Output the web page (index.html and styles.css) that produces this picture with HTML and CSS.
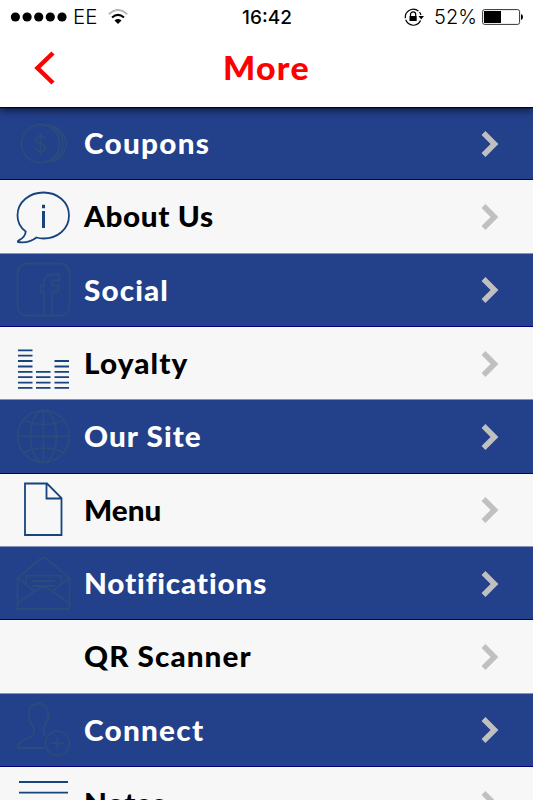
FILE: index.html
```html
<!DOCTYPE html>
<html lang="en">
<head>
<meta charset="utf-8">
<title>More</title>
<link rel="stylesheet" href="styles.css">
</head>
<body>
<div class="screen">
  <header class="top">
    <div class="status">
      <div class="carrier">
        <svg width="58" height="12" viewBox="0 0 58 12"><circle cx="5.4" cy="6" r="4.6"/><circle cx="17.1" cy="6" r="4.6"/><circle cx="28.7" cy="6" r="4.6"/><circle cx="40.3" cy="6" r="4.6"/><circle cx="52" cy="6" r="4.6"/></svg>
        <span class="network">EE</span>
        <svg class="wifi" width="20" height="16" viewBox="0 0 20 16" fill="none" stroke-width="2"><path d="M.8 5.2Q10-3.2 19.2 5.2" stroke="#b5b5b5"/><path d="M4 8.6Q10 3.2 16 8.6" stroke="#000"/><path d="M6.5 11.4Q10 8.5 13.500 11.4L10 15Z" fill="#000"/></svg>
      </div>
      <time class="clock">16:42</time>
      <div class="power">
        <svg width="20" height="18" viewBox="0 0 20 18" fill="none" stroke="#000" stroke-width="1.2"><path d="M16.6 12.500A8 8 0 1 1 17 7" stroke-dasharray="19 1.500"/><path d="M14.500 8H20L17.200 11.500Z" fill="#000" stroke="none"/><path d="M6.500 8V6.500a2.600 2.600 0 0 1 5.200 0V8"/><path d="M5.500 8h7.200v5H5.500z" fill="#000" stroke="none"/></svg>
        <span class="percent">52%</span>
        <svg width="42" height="18" viewBox="0 0 42 18"><rect x=".6" y="1.600" width="37" height="14.800" rx="2" fill="none" stroke="#333"/><path d="M2 3h17v12H2z"/><path d="M39 6q2 .5 2 3t-2 3z"/></svg>
      </div>
    </div>
    <nav class="bar">
      <svg class="back" width="22" height="34" viewBox="0 0 22 34" fill="none" stroke="#f00" stroke-width="4.500"><path d="M19 2L3.500 17L19 32"/></svg>
      <h1 class="title">More</h1>
    </nav>
  </header>
  <main class="list">
    <a class="row blue"><svg class="icon" viewBox="0 0 84 73"><circle cx="40.500" cy="36.700" r="19"/><path d="M46 18.500a18.300 18.300 0 0 1 0 36.500M52 19a18.300 18.300 0 0 1 0 35.500M45 32q-1-3-4.500-3-4.500 0-4.500 3.500t4.500 4 4.700 4-4.700 4q-4 0-5-3.500M40.500 26v21.500"/></svg><span class="label coupons">Coupons</span><svg class="go" viewBox="0 0 18 28"><path d="M2.500 3L13.500 14L2.500 25"/></svg></a>
    <a class="row"><svg class="icon" viewBox="0 0 84 73"><path d="M43.500 12.500C57 12.500 69 21.500 69 35.500S57 58.500 43.500 58.500q-4 0-7-1-8 6.200-18.500 4.500-.5-1 .8-1.600 6.700-3.500 6.900-8.900C21 48 17.500 42.500 17.500 35.500 17.500 21.500 30 12.500 43.500 12.500Z"/><path d="M43.500 31v17M43.500 24.800v3.400" stroke-width="3"/></svg><span class="label about">About Us</span><svg class="go" viewBox="0 0 18 28"><path d="M2.500 3L13.500 14L2.500 25"/></svg></a>
    <a class="row blue"><svg class="icon" viewBox="0 0 84 73"><rect x="17.500" y="10.500" width="52" height="52" rx="9"/><path d="M44 62.500V38.500h-3.500v-6H44V29q0-7 8-7.500h7v6h-5q-2 0-2 3v2h7l-1 6h-6V62.500"/></svg><span class="label social">Social</span><svg class="go" viewBox="0 0 18 28"><path d="M2.500 3L13.500 14L2.500 25"/></svg></a>
    <a class="row"><svg class="icon" viewBox="0 0 84 73"><path d="M18 23.300h14.500M18 28.600h14.500M18 34h14.500M18 39.500h14.500M18 44.800h14.500M18 50.200h14.500M18 55.600h14.500M18 60.900h14.500M36 44.800h14.500M36 50.200h14.500M36 55.600h14.500M36 60.900h14.500M54.500 34H69M54.500 39.500H69M54.500 44.800H69M54.500 50.200H69M54.500 55.600H69M54.500 60.900H69"/></svg><span class="label loyalty">Loyalty</span><svg class="go" viewBox="0 0 18 28"><path d="M2.500 3L13.500 14L2.500 25"/></svg></a>
    <a class="row blue"><svg class="icon" viewBox="0 0 84 73"><circle cx="43.500" cy="36.300" r="26"/><ellipse cx="43.500" cy="36.300" rx="13" ry="26"/><path d="M43.500 10.300v52M17.500 36.300h52M23 20q20.500 9 41 0M23 52.600q20.500-9 41 0"/></svg><span class="label site">Our Site</span><svg class="go" viewBox="0 0 18 28"><path d="M2.500 3L13.500 14L2.500 25"/></svg></a>
    <a class="row"><svg class="icon" viewBox="0 0 84 73"><path d="M25 10.500H47L61.500 25V62H25ZM46.500 10.700v14.800h15"/></svg><span class="label">Menu</span><svg class="go" viewBox="0 0 18 28"><path d="M2.500 3L13.500 14L2.500 25"/></svg></a>
    <a class="row blue"><svg class="icon" viewBox="0 0 84 73"><path d="M17.500 31V62H69.500V31L47 12.300q-3.500-3-7 0ZM17.500 31L34 43.500M69.500 31L53 43.500M17.500 56.500L38 42q5.500-4 11 0L69.500 56.500M26 36.500V28.700H61V36.500M32 34h23M32 39h23"/></svg><span class="label notifications">Notifications</span><svg class="go" viewBox="0 0 18 28"><path d="M2.500 3L13.500 14L2.500 25"/></svg></a>
    <a class="row"><svg class="icon" viewBox="0 0 84 73"></svg><span class="label scanner">QR Scanner</span><svg class="go" viewBox="0 0 18 28"><path d="M2.500 3L13.500 14L2.500 25"/></svg></a>
    <a class="row blue"><svg class="icon" viewBox="0 0 84 73"><circle cx="57.500" cy="50.200" r="12"/><path d="M57.500 43.700v13M51 50.200h13M44 55H17.500q0-5 7-8.500 9.500-3 9.500-7V35q-3-3-3.500-6.500-2-1-1.500-4.500-1-13 9-13.500 11 .5 10 13.500 .5 3.500-1.500 4.500-.5 3.500-3 6.500v4.500q0 2 2 4"/></svg><span class="label connect">Connect</span><svg class="go" viewBox="0 0 18 28"><path d="M2.500 3L13.500 14L2.500 25"/></svg></a>
    <a class="row"><svg class="icon" viewBox="0 0 84 73"><path d="M19 15h49M19 25.700h49M19 36.500h49M19 47.500h49"/></svg><span class="label notes">Notes</span><svg class="go" viewBox="0 0 18 28"><path d="M2.500 3L13.500 14L2.500 25"/></svg></a>
  </main>
</div>
</body>
</html>
```
FILE: styles.css
```css
* { box-sizing: border-box; }
body { margin: 0; background: #f7f7f7; }
.screen { width: 533px; height: 800px; overflow: hidden; font-family: Lato, "Liberation Sans", sans-serif; }
.top { position: relative; height: 107px; background: #fff; box-shadow: 0 1px 1px #000044, 0 3px 8px rgba(0,0,0,.65); }
.status { height: 34px; display: grid; grid-template-columns: 1fr auto 1fr; align-items: center; padding: 0 9px 0 10px; }
.carrier, .power { display: flex; align-items: center; }
.power { justify-content: flex-end; }
.network { margin-left: 5px; font: 300 20.5px/24px Inter, sans-serif; }
.wifi { margin-left: 11px; }
.clock { font: 500 19px Inter, sans-serif; }
.percent { margin: 0 5px 0 10px; font: 300 20px Inter, sans-serif; }
.bar { height: 68px; display: flex; align-items: center; padding-left: 34px; }
.back { flex: none; }
.title { flex: 1; margin: 0 56px 0 0; text-align: center; font-size: 32px; font-weight: 900; color: #f00; letter-spacing: 1.2px; line-height: 68px; transform: scaleX(1.06); }
.row { height: 73.33px; display: flex; align-items: center; background: #f7f7f7; color: #000; border-bottom: 1px solid #8793b5; }
.row.blue { background: #23408b; color: #fff; border-bottom-color: #00007f; }
.icon { flex: none; width: 84px; height: 73px; fill: none; stroke: #17437e; stroke-width: 1.8; }
.blue .icon { stroke: #2b4b7c; }
.label { flex: 1; font-size: 28px; font-weight: 900; white-space: nowrap; transform: scaleX(1.06); transform-origin: left; font-variant-ligatures: none; }
.coupons, .connect { letter-spacing: 1.2px; }
.social, .loyalty { letter-spacing: 1.05px; }
.site, .scanner { letter-spacing: 1px; }
.notes { letter-spacing: .4px; }
.about { letter-spacing: .6px; }
.notifications { letter-spacing: .8px; }
.go { width: 18px; height: 28px; margin: 1px 34px 0 0; fill: none; stroke: #c0c0c0; stroke-width: 5.500; }
```
